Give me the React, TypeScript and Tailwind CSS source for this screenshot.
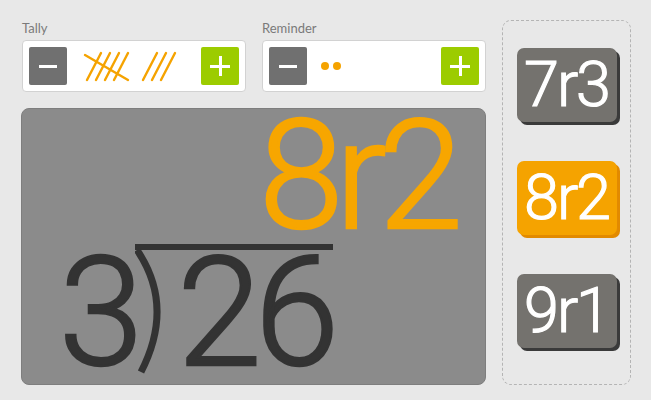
import React from "react";

const font = { fontFamily: "Lato, 'Noto Sans', sans-serif" };
const numFont = { fontFamily: "Roboto, Lato, sans-serif" };

function MinusButton() {
  return (
    <button className="flex h-[38px] w-[38px] items-center justify-center rounded-[2px] bg-[#707070]">
      <span className="block h-[3px] w-[18px] bg-white" />
    </button>
  );
}

function PlusButton() {
  return (
    <button className="relative flex h-[38px] w-[38px] items-center justify-center rounded-[2px] bg-[#9ccc00]">
      <span className="absolute h-[3px] w-[20px] bg-white" />
      <span className="absolute h-[20px] w-[3px] bg-white" />
    </button>
  );
}

function TallyMarks() {
  return (
    <svg width="100" height="34" viewBox="0 0 100 34" className="ml-[14px]">
      <g stroke="#f5a300" strokeWidth="2.4" strokeLinecap="round" fill="none">
        <line x1="6" y1="31" x2="20" y2="4" />
        <line x1="15" y1="31" x2="29" y2="4" />
        <line x1="24" y1="31" x2="38" y2="4" />
        <line x1="33" y1="31" x2="47" y2="4" />
        <line x1="4" y1="6" x2="47" y2="31" />
        <line x1="62" y1="31" x2="76" y2="4" />
        <line x1="71" y1="31" x2="85" y2="4" />
        <line x1="80" y1="31" x2="94" y2="4" />
      </g>
    </svg>
  );
}

function Counter({ label, children }: { label: string; children: React.ReactNode }) {
  return (
    <div className="flex flex-col">
      <span className="mb-[4px] text-[13px] leading-[16px] text-[#7a7a7a]">{label}</span>
      <div className="flex h-[52px] items-center rounded-[4px] border border-[#d2d2d2] bg-white px-[6px]">
        <MinusButton />
        <div className="flex flex-1 items-center">{children}</div>
        <PlusButton />
      </div>
    </div>
  );
}

function Answer({ text, active }: { text: string; active?: boolean }) {
  return (
    <button
      style={numFont}
      className={
        active
          ? "flex h-[74px] w-[100px] items-center justify-center rounded-[7px] bg-[#f5a300] text-[63px] font-light leading-none text-white shadow-[3px_3px_0_#e28a00] [-webkit-text-stroke-width:1.2px]"
          : "flex h-[74px] w-[100px] items-center justify-center rounded-[7px] bg-[#74726e] text-[63px] font-light leading-none text-white shadow-[3px_3px_0_#3a3a3a] [-webkit-text-stroke-width:1.2px]"
      }
    >
      <span className="-mt-[2px] tracking-[-2px]">{text}</span>
    </button>
  );
}

export default function App() {
  return (
    <div className="flex h-[400px] w-[651px] bg-[#e8e8e8]" style={font}>
      <div className="flex w-[486px] flex-col pl-[21px] pt-[20px]">
        <div className="grid grid-cols-2 gap-[16px] pl-[1px]">
          <Counter label="Tally">
            <TallyMarks />
          </Counter>
          <Counter label="Reminder">
            <div className="ml-[14px] flex gap-[4px]">
              <span className="block h-[8px] w-[8px] rounded-full bg-[#f5a300]" />
              <span className="block h-[8px] w-[8px] rounded-full bg-[#f5a300]" />
            </div>
          </Counter>
        </div>

        {/* worked division */}
        <div
          style={numFont}
          className="mt-[16px] flex h-[277px] flex-col overflow-hidden rounded-[8px] border border-[#7e7e7e] bg-[#8b8b8b] font-light [-webkit-text-stroke-width:2.5px]"
        >
          <div className="pl-[237px] pt-[5px] text-[152px] leading-[124px] tracking-[-8px] text-[#f7a600]">
            8r2
          </div>
          <div className="mt-[6px] flex items-start pl-[37px]">
            <span className="mt-[7px] text-[152px] leading-[124px] text-[#333333]">3</span>
            <svg width="200" height="130" viewBox="0 0 200 130" className="-ml-[8px] shrink-0">
              <path d="M0 3 H198" stroke="#333333" strokeWidth="6" />
              <path d="M2 6 Q40 62 6 128" stroke="#333333" strokeWidth="7" fill="none" />
            </svg>
            <span className="-ml-[158px] mt-[7px] text-[152px] leading-[124px] tracking-[-7px] text-[#333333]">26</span>
          </div>
        </div>
      </div>

      <div className="ml-[16px] mt-[20px] flex h-[365px] w-[129px] flex-col items-center gap-[39px] rounded-[9px] border border-dashed border-[#b4b4b4] pt-[27px]">
        <Answer text="7r3" />
        <Answer text="8r2" active />
        <Answer text="9r1" />
      </div>
    </div>
  );
}
